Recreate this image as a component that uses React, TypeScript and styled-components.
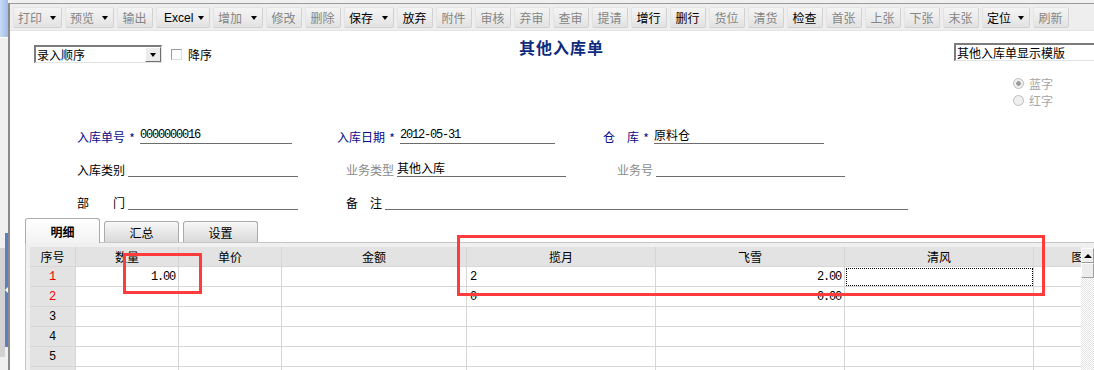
import React from "react";
import styled, { createGlobalStyle } from "styled-components";

const GlobalStyle = createGlobalStyle`
  html, body {
    margin: 0;
    padding: 0;
  }
  body {
    width: 1094px;
    height: 370px;
    overflow: hidden;
    font-family: "Noto Sans CJK SC", "Liberation Sans", sans-serif;
    font-size: 12px;
    color: #000;
  }
`;

const mono = `"Liberation Mono", "DejaVu Sans Mono", monospace`;

const Page = styled.div`
  position: relative;
  display: flex;
  width: 1094px;
  height: 370px;
  overflow: hidden;
  background: #f0f0f0;
`;

/* left dock strip */
const SideStrip = styled.div`
  flex: 0 0 8px;
  display: flex;
  flex-direction: column;
`;

const StripTop = styled.div`
  height: 37px;
  background: linear-gradient(90deg, #c9dbf3, #9fbde8);
  border-bottom: 1px solid #fff;
`;

const StripSpacer = styled.div`
  height: 195px;
`;

const Handle = styled.div`
  display: flex;
  height: 124px;
`;

const HandleShade = styled.div`
  width: 5px;
  margin-top: 15px;
  background: #d2d2d2;
`;

const HandleBar = styled.div`
  width: 3px;
  height: 114px;
  display: flex;
  align-items: center;
  justify-content: center;
  background: #5b7fc4;
`;

const HandleArrow = styled.div`
  width: 0;
  height: 0;
  border-top: 3px solid transparent;
  border-bottom: 3px solid transparent;
  border-right: 3px solid #fff;
`;

const Main = styled.div`
  flex: 1;
  min-width: 0;
  display: flex;
  flex-direction: column;
  margin-top: 3px;
  border-top: 1px solid #9a9a9a;
  border-left: 2px solid #8a8a8a;
  background: #fff;
`;

/* toolbar */
const Toolbar = styled.div`
  display: flex;
  gap: 3px;
  height: 27px;
  box-sizing: border-box;
  padding: 3px 0 0 3px;
  background: #eeeeee;
  border-bottom: 1px solid #e4e4e4;
`;

const ToolButton = styled.div<{ $w: number; $on: boolean }>`
  flex: 0 0 ${(p) => p.$w}px;
  height: 21px;
  box-sizing: border-box;
  display: flex;
  align-items: center;
  justify-content: ${(p) => (p.$w > 40 ? "space-between" : "center")};
  padding: 0 5px 0 4px;
  border: 1px solid #e4e4e4;
  border-right-color: #d2d2d2;
  border-bottom-color: #d0d0d0;
  border-radius: 2px;
  background: linear-gradient(180deg, #f4f4f4 0%, #ebebeb 55%, #e2e2e2 100%);
  color: ${(p) => (p.$on ? "#000" : "#858585")};
  white-space: nowrap;
`;

const Latin = styled.span`
  font-family: "Liberation Sans", Arial, sans-serif;
  padding-left: 3px;
`;

const Caret = styled.span`
  width: 0;
  height: 0;
  border-left: 3.5px solid transparent;
  border-right: 3.5px solid transparent;
  border-top: 4px solid #000;
`;

/* header area */
const TopRow = styled.div`
  display: flex;
  align-items: flex-start;
  height: 80px;
  padding-left: 24px;
`;

const LeftControls = styled.div`
  flex: 0 0 485px;
  display: flex;
  align-items: center;
  margin-top: 14px;
`;

const SelectBox = styled.div<{ $w: number }>`
  width: ${(p) => p.$w}px;
  flex-shrink: 0;
  height: 18px;
  box-sizing: border-box;
  display: flex;
  align-items: center;
  border: 1px solid #e3e3e3;
  border-top: 2px solid #7c7c7c;
  border-left: 2px solid #7c7c7c;
  background: #fff;
  white-space: nowrap;
  overflow: hidden;
`;

const SelectText = styled.span`
  flex: 1;
  padding-left: 1px;
  line-height: 14px;
`;

const SelectButton = styled.div`
  flex: 0 0 16px;
  height: 15px;
  box-sizing: border-box;
  display: flex;
  align-items: center;
  justify-content: center;
  background: #ececec;
  border: 1px solid #fff;
  border-right-color: #6f6f6f;
  border-bottom-color: #6f6f6f;
`;

const CheckBox = styled.div`
  width: 11px;
  height: 11px;
  box-sizing: border-box;
  margin-left: 9px;
  border: 1px solid #dcdcdc;
  border-top-color: #9a9a9a;
  border-left-color: #9a9a9a;
  background: #fff;
`;

const CheckLabel = styled.span`
  margin-left: 6px;
`;

const Title = styled.div`
  flex: 0 0 435px;
  margin-top: 7px;
  font-size: 16px;
  line-height: 18px;
  font-weight: bold;
  letter-spacing: 1px;
  color: #0d2c7f;
`;

const RightControls = styled.div`
  flex: 1;
  min-width: 0;
  display: flex;
  flex-direction: column;
  align-items: flex-start;
  margin-top: 12px;
`;

const RadioGroup = styled.div`
  display: flex;
  flex-direction: column;
  margin: 14px 0 0 59px;
`;

const RadioRow = styled.div`
  display: flex;
  align-items: center;
  gap: 5px;
  height: 17px;
  color: #a6a6a6;
`;

const RadioDot = styled.div<{ $checked: boolean }>`
  width: 11px;
  height: 11px;
  box-sizing: border-box;
  border-radius: 50%;
  border: 1px solid #bdbdbd;
  background: ${(p) =>
    p.$checked
      ? "radial-gradient(circle, #9a9a9a 0 2px, #efefef 2.5px)"
      : "#efefef"};
`;

/* form */
const FormBlock = styled.div`
  display: flex;
  flex-direction: column;
  gap: 17px;
  padding: 17px 0 0 67px;
`;

const FormRow = styled.div`
  display: flex;
  height: 16px;
`;

const Field = styled.div<{ $w: number }>`
  flex: 0 0 ${(p) => p.$w}px;
  display: flex;
  align-items: flex-end;
`;

const tones = { blue: "#0a0a8a", gray: "#8a8a8a", black: "#000" };

const Label = styled.span<{ $tone: keyof typeof tones }>`
  color: ${(p) => tones[p.$tone]};
  line-height: 14px;
  white-space: pre;
`;

const Star = styled.span`
  width: 14px;
  text-align: center;
  color: #0a0a8a;
  line-height: 12px;
`;

const Value = styled.div<{ $w: number; $mono: boolean }>`
  flex: 0 0 ${(p) => p.$w}px;
  height: 16px;
  box-sizing: border-box;
  margin-left: 1px;
  border-bottom: 1px solid #6c6c6c;
  line-height: 14px;
  white-space: nowrap;
  font-family: ${(p) => (p.$mono ? mono : "inherit")};
  letter-spacing: ${(p) => (p.$mono ? "-1.2px" : "0")};
`;

const Blank = styled(Value)`
  margin-left: 3px;
`;

/* tabs */
const TabsBar = styled.div`
  display: flex;
  align-items: flex-end;
  gap: 4px;
  height: 24px;
  margin-top: 8px;
  padding-left: 15px;
`;

const Tab = styled.div<{ $active: boolean }>`
  position: relative;
  z-index: 1;
  flex: 0 0 75px;
  height: ${(p) => (p.$active ? 25 : 21)}px;
  margin-bottom: ${(p) => (p.$active ? -1 : 0)}px;
  box-sizing: border-box;
  display: flex;
  align-items: center;
  justify-content: center;
  border: 1px solid #ababab;
  border-bottom: none;
  border-radius: 3px 3px 0 0;
  background: ${(p) =>
    p.$active
      ? "linear-gradient(180deg, #ffffff, #f2f2f2)"
      : "linear-gradient(180deg, #f8f8f8, #d9d9d9)"};
  font-weight: ${(p) => (p.$active ? "bold" : "normal")};
`;

const TabPanel = styled.div`
  flex: 1;
  min-height: 0;
  display: flex;
  margin-left: 15px;
  padding: 4px 0 0 4px;
  border-top: 1px solid #c6c6c6;
  border-left: 1px solid #c6c6c6;
  background: #f0f0f0;
`;

const GridArea = styled.div`
  flex: 1;
  min-width: 0;
  overflow: hidden;
`;

const Grid = styled.div`
  display: grid;
  grid-template-columns: 46px 103px 103px 185px 189px 189px 189px 100px;
  grid-auto-rows: 20px;
  background: #fff;
`;

const Cell = styled.div<{
  $head?: boolean;
  $align?: "left" | "right" | "center";
  $red?: boolean;
  $focus?: boolean;
  $num?: boolean;
}>`
  box-sizing: border-box;
  display: flex;
  align-items: center;
  justify-content: ${(p) =>
    p.$align === "right" ? "flex-end" : p.$align === "left" ? "flex-start" : "center"};
  padding: 0 3px;
  border-right: 1px solid #d6d6d6;
  border-bottom: 1px solid #d6d6d6;
  background: ${(p) => (p.$head ? "#e3e3e3" : "#fff")};
  color: ${(p) => (p.$red ? "#ee0000" : "#000")};
  font-family: ${(p) => (p.$head && !p.$num ? "inherit" : mono)};
  letter-spacing: ${(p) => (p.$head ? "0" : "-1.2px")};
  white-space: nowrap;
  overflow: hidden;
  outline: ${(p) => (p.$focus ? "1px dotted #000" : "none")};
  outline-offset: -2px;
`;

const Scrollbar = styled.div`
  flex: 0 0 13px;
  display: flex;
  flex-direction: column;
  margin-top: 1px;
  background-color: #fafafa;
  background-image: repeating-conic-gradient(#e4e4e4 0 25%, #ffffff 0 50%);
  background-size: 2px 2px;
`;

const ScrollButton = styled.div`
  height: 15px;
  box-sizing: border-box;
  display: flex;
  align-items: center;
  justify-content: center;
  background: #eeeeee;
  border: 1px solid #fff;
  border-right-color: #9a9a9a;
  border-bottom-color: #9a9a9a;
`;

const UpCaret = styled.span`
  width: 0;
  height: 0;
  border-left: 4px solid transparent;
  border-right: 4px solid transparent;
  border-bottom: 4px solid #000;
`;

const Thumb = styled.div`
  height: 15px;
  box-sizing: border-box;
  background: #ececec;
  border: 1px solid #fff;
  border-right-color: #a0a0a0;
  border-bottom-color: #a0a0a0;
`;

/* red annotation frames drawn over the grid */
const Mark = styled.div<{ $x: number; $y: number; $w: number; $h: number }>`
  position: absolute;
  left: ${(p) => p.$x}px;
  top: ${(p) => p.$y}px;
  width: ${(p) => p.$w}px;
  height: ${(p) => p.$h}px;
  box-sizing: border-box;
  border: 3px solid #ff3c3c;
  pointer-events: none;
`;

type Tool = { label: string; w: number; on: boolean; menu?: boolean; latin?: boolean };

const tools: Tool[] = [
  { label: "打印", w: 49, on: false, menu: true },
  { label: "预览", w: 49, on: false, menu: true },
  { label: "输出", w: 36, on: false },
  { label: "Excel", w: 54, on: true, menu: true, latin: true },
  { label: "增加", w: 50, on: false, menu: true },
  { label: "修改", w: 36, on: false },
  { label: "删除", w: 36, on: false },
  { label: "保存", w: 50, on: true, menu: true },
  { label: "放弃", w: 36, on: true },
  { label: "附件", w: 36, on: false },
  { label: "审核", w: 36, on: false },
  { label: "弃审", w: 36, on: false },
  { label: "查审", w: 36, on: false },
  { label: "提请", w: 36, on: false },
  { label: "增行", w: 36, on: true },
  { label: "删行", w: 36, on: true },
  { label: "货位", w: 36, on: false },
  { label: "清货", w: 36, on: false },
  { label: "检查", w: 36, on: true },
  { label: "首张", w: 36, on: false },
  { label: "上张", w: 36, on: false },
  { label: "下张", w: 36, on: false },
  { label: "末张", w: 36, on: false },
  { label: "定位", w: 48, on: true, menu: true },
  { label: "刷新", w: 36, on: false },
];

type FieldDef = {
  label: string;
  tone: keyof typeof tones;
  star?: boolean;
  value?: string;
  mono?: boolean;
  line: number;
  w: number;
};

const formRows: FieldDef[][] = [
  [
    { label: "入库单号", tone: "blue", star: true, value: "0000000016", mono: true, line: 152, w: 260 },
    { label: "入库日期", tone: "blue", star: true, value: "2012-05-31", mono: true, line: 155, w: 266 },
    { label: "仓　库", tone: "blue", star: true, value: "原料仓", line: 170, w: 240 },
  ],
  [
    { label: "入库类别", tone: "black", line: 170, w: 269 },
    { label: "业务类型", tone: "gray", value: "其他入库", line: 169, w: 271 },
    { label: "业务号", tone: "gray", line: 189, w: 240 },
  ],
  [
    { label: "部　　门", tone: "black", line: 170, w: 269 },
    { label: "备　注", tone: "black", line: 523, w: 600 },
  ],
];

const columns = ["序号", "数量", "单价", "金额", "揽月", "飞雪", "清风", "图片"];

type RowData = { qty?: string; moon?: string; snow?: string; red?: boolean; focus?: boolean };

const rows: RowData[] = [
  { qty: "1.00", moon: "2", snow: "2.00", red: true, focus: true },
  { moon: "0", snow: "0.00", red: true },
  {},
  {},
  {},
  {},
];

const App: React.FC = () => {
  return (
    <>
      <GlobalStyle />
      <Page>
        <SideStrip>
          <StripTop />
          <StripSpacer />
          <Handle>
            <HandleShade />
            <HandleBar>
              <HandleArrow />
            </HandleBar>
          </Handle>
        </SideStrip>

        <Main>
          <Toolbar>
            {tools.map((t) => (
              <ToolButton key={t.label} $w={t.w} $on={t.on}>
                {t.latin ? <Latin>{t.label}</Latin> : <span>{t.label}</span>}
                {t.menu ? <Caret /> : null}
              </ToolButton>
            ))}
          </Toolbar>

          <TopRow>
            <LeftControls>
              <SelectBox $w={128}>
                <SelectText>录入顺序</SelectText>
                <SelectButton>
                  <Caret />
                </SelectButton>
              </SelectBox>
              <CheckBox />
              <CheckLabel>降序</CheckLabel>
            </LeftControls>
            <Title>其他入库单</Title>
            <RightControls>
              <SelectBox $w={150}>
                <SelectText>其他入库单显示模版</SelectText>
              </SelectBox>
              <RadioGroup>
                <RadioRow>
                  <RadioDot $checked />
                  蓝字
                </RadioRow>
                <RadioRow>
                  <RadioDot $checked={false} />
                  红字
                </RadioRow>
              </RadioGroup>
            </RightControls>
          </TopRow>

          <FormBlock>
            {formRows.map((row, i) => (
              <FormRow key={i}>
                {row.map((f) => (
                  <Field key={f.label} $w={f.w}>
                    <Label $tone={f.tone}>{f.label}</Label>
                    {f.star ? (
                      <>
                        <Star>*</Star>
                        <Value $w={f.line} $mono={!!f.mono}>
                          {f.value}
                        </Value>
                      </>
                    ) : (
                      <Blank $w={f.line} $mono={!!f.mono}>
                        {f.value}
                      </Blank>
                    )}
                  </Field>
                ))}
              </FormRow>
            ))}
          </FormBlock>

          <TabsBar>
            <Tab $active>明细</Tab>
            <Tab $active={false}>汇总</Tab>
            <Tab $active={false}>设置</Tab>
          </TabsBar>

          <TabPanel>
            <GridArea>
              <Grid>
                {columns.map((c) => (
                  <Cell key={c} $head>
                    {c}
                  </Cell>
                ))}
                {rows.map((r, i) => (
                  <React.Fragment key={i}>
                    <Cell $head $num $red={r.red}>
                      {i + 1}
                    </Cell>
                    <Cell $align="right">{r.qty}</Cell>
                    <Cell />
                    <Cell />
                    <Cell $align="left">{r.moon}</Cell>
                    <Cell $align="right">{r.snow}</Cell>
                    <Cell $focus={r.focus} />
                    <Cell />
                  </React.Fragment>
                ))}
              </Grid>
            </GridArea>
            <Scrollbar>
              <ScrollButton>
                <UpCaret />
              </ScrollButton>
              <Thumb />
            </Scrollbar>
          </TabPanel>
        </Main>

        <Mark $x={123} $y={253} $w={79} $h={41} />
        <Mark $x={457} $y={235} $w={588} $h={61} />
      </Page>
    </>
  );
};

export default App;
